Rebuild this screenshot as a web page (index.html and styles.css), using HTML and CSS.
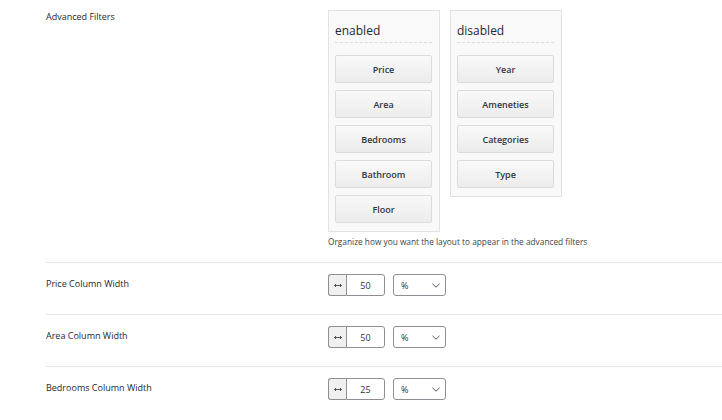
FILE: index.html
```html
<!DOCTYPE html>
<html lang="en">
<head>
    <meta charset="UTF-8">
    <title>Advanced Filters Settings</title>
    <link rel="stylesheet" href="styles.css">
</head>
<body>
    <div class="settings">
        <div class="setting-row first">
            <div class="setting-label">Advanced Filters</div>
            <div class="setting-field">
                <div class="sorters">
                    <div class="sort-box">
                        <h4>enabled</h4>
                        <div class="sort-item">Price</div>
                        <div class="sort-item">Area</div>
                        <div class="sort-item">Bedrooms</div>
                        <div class="sort-item">Bathroom</div>
                        <div class="sort-item">Floor</div>
                    </div>
                    <div class="sort-box">
                        <h4>disabled</h4>
                        <div class="sort-item">Year</div>
                        <div class="sort-item">Ameneties</div>
                        <div class="sort-item">Categories</div>
                        <div class="sort-item">Type</div>
                    </div>
                </div>
                <p class="description">Organize how you want the layout to appear in the advanced filters</p>
            </div>
        </div>

        <div class="setting-row">
            <div class="setting-label">Price Column Width</div>
            <div class="setting-field inline">
                <div class="dimension">
                    <span class="addon"><svg width="8" height="5" viewBox="0 0 8 5"><path d="M0.5 2.5H7.5M2 1L0.5 2.5L2 4M6 1L7.5 2.5L6 4" fill="none" stroke="#3c434a" stroke-width="0.9"/></svg></span>
                    <input type="text" value="50">
                </div>
                <div class="unit-select"><span>%</span><svg width="8" height="5" viewBox="0 0 8 5"><path d="M0.5 0.8L4 4.2L7.5 0.8" fill="none" stroke="#50575e" stroke-width="1"/></svg></div>
            </div>
        </div>

        <div class="setting-row">
            <div class="setting-label">Area Column Width</div>
            <div class="setting-field inline">
                <div class="dimension">
                    <span class="addon"><svg width="8" height="5" viewBox="0 0 8 5"><path d="M0.5 2.5H7.5M2 1L0.5 2.5L2 4M6 1L7.5 2.5L6 4" fill="none" stroke="#3c434a" stroke-width="0.9"/></svg></span>
                    <input type="text" value="50">
                </div>
                <div class="unit-select"><span>%</span><svg width="8" height="5" viewBox="0 0 8 5"><path d="M0.5 0.8L4 4.2L7.5 0.8" fill="none" stroke="#50575e" stroke-width="1"/></svg></div>
            </div>
        </div>

        <div class="setting-row">
            <div class="setting-label">Bedrooms Column Width</div>
            <div class="setting-field inline">
                <div class="dimension">
                    <span class="addon"><svg width="8" height="5" viewBox="0 0 8 5"><path d="M0.5 2.5H7.5M2 1L0.5 2.5L2 4M6 1L7.5 2.5L6 4" fill="none" stroke="#3c434a" stroke-width="0.9"/></svg></span>
                    <input type="text" value="25">
                </div>
                <div class="unit-select"><span>%</span><svg width="8" height="5" viewBox="0 0 8 5"><path d="M0.5 0.8L4 4.2L7.5 0.8" fill="none" stroke="#50575e" stroke-width="1"/></svg></div>
            </div>
        </div>
    </div>
</body>
</html>
```

FILE: styles.css
```css
body {
    margin: 0;
    background: #fff;
    font-family: "Open Sans", "Noto Sans", sans-serif;
    font-size: 9px;
    color: #23282d;
}
.settings {
    margin-left: 46px;
}
.setting-row {
    display: flex;
    align-items: flex-start;
    padding: 11px 0 18px 0;
    border-top: 1px solid #e5e5e5;
}
.setting-row.first {
    border-top: none;
    padding: 10px 0 14px 0;
}
.setting-label {
    width: 282px;
    flex-shrink: 0;
    line-height: 12px;
    padding-top: 4px;
}
.first .setting-label {
    padding-top: 1px;
}
.sorters {
    display: flex;
    align-items: flex-start;
    gap: 10px;
}
.sort-box {
    width: 97px;
    padding: 11px 7px 8px 6px;
    background: #f9f9f9;
    border: 1px solid #e2e2e2;
}
.sort-box h4 {
    margin: 0 0 12px 0;
    font-size: 12px;
    font-weight: normal;
    line-height: 17px;
    padding-bottom: 3px;
    color: #23282d;
    border-bottom: 1px dashed #dcdcdc;
}
.sort-item {
    height: 26px;
    line-height: 27px;
    margin-bottom: 7px;
    text-align: center;
    font-weight: 600;
    font-size: 9px;
    color: #32373c;
    border: 1px solid #dcdcdc;
    border-radius: 2px;
    background: linear-gradient(#f9f9f9, #ececec);
}
.sort-item:last-child {
    margin-bottom: 0;
}
.description {
    margin: 4px 0 0 0;
    line-height: 12px;
    font-size: 8.3px;
    color: #3c434a;
}
.inline {
    display: flex;
    gap: 8px;
}
.dimension {
    display: flex;
    height: 22px;
}
.addon {
    width: 17px;
    display: flex;
    align-items: center;
    justify-content: center;
    background: #f0f0f1;
    border: 1px solid #8c8f94;
    border-right: none;
    border-radius: 3px 0 0 3px;
}
.dimension input {
    width: 39px;
    height: 22px;
    box-sizing: border-box;
    margin: 0;
    padding: 0;
    border: 1px solid #8c8f94;
    border-radius: 0 3px 3px 0;
    text-align: center;
    font-family: inherit;
    font-size: 9px;
    color: #2c3338;
}
.unit-select {
    width: 53px;
    height: 22px;
    box-sizing: border-box;
    display: flex;
    align-items: center;
    justify-content: space-between;
    padding: 0 5px 0 7px;
    border: 1px solid #8c8f94;
    border-radius: 3px;
    font-size: 9px;
    color: #2c3338;
}
```
